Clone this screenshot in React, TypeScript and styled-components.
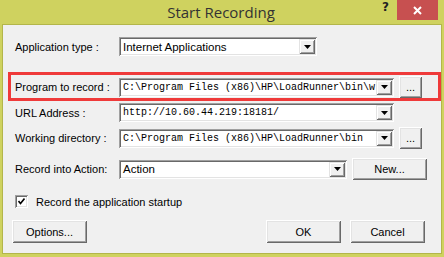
import React from 'react';
import styled, { createGlobalStyle } from 'styled-components';

const GlobalStyle = createGlobalStyle`
  body {
    margin: 0;
    background: #ffffff;
  }
`;

const Window = styled.div`
  display: flex;
  flex-flow: column;
  width: 444px;
  height: 257px;
  background-color: #cfd25f;
  font-family: 'Liberation Sans', Arial, sans-serif;
  font-size: 11px;
  color: #000;
  overflow: hidden;
`;

const TitleBar = styled.div`
  display: grid;
  grid-template-columns: 1fr auto 1fr;
  align-items: start;
  height: 24px;
`;

const Title = styled.div`
  grid-column: 2;
  font-family: 'Open Sans', 'Noto Sans', sans-serif;
  font-size: 15px;
  line-height: 22px;
  color: #333;
  padding-top: 1px;
  margin-left: -2px;
`;

const Controls = styled.div`
  grid-column: 3;
  justify-self: end;
  display: flex;
  align-items: flex-start;
  margin-right: 6px;
`;

const Help = styled.div`
  font-family: 'DejaVu Sans', sans-serif;
  font-weight: bold;
  font-size: 12px;
  line-height: 14px;
  color: #222;
  margin-right: 8px;
`;

const Close = styled.div`
  display: flex;
  justify-content: center;
  align-items: center;
  width: 41px;
  height: 20px;
  background-color: #c75050;
`;

const Client = styled.div`
  flex: 1;
  display: flex;
  flex-flow: column;
  margin: 0 2px 3px 2px;
  border: 1px solid #b3b64a;
  background-color: #f0f0f0;
`;

// label column + field + optional button
const Row = styled.div<{ $mt: number }>`
  display: grid;
  grid-template-columns: 99px auto auto;
  justify-content: start;
  align-items: center;
  column-gap: 5px;
  margin-top: ${(p) => p.$mt}px;
  padding-left: 12px;
`;

const Highlight = styled(Row)`
  margin-left: 5px;
  padding: 1px 0 0 4px;
  border: 3px solid #ef3a3a;
`;

const Label = styled.span`
  white-space: nowrap;
`;

const Combo = styled.div<{ $w: number }>`
  display: flex;
  align-items: center;
  justify-content: space-between;
  box-sizing: border-box;
  width: ${(p) => p.$w}px;
  height: 19px;
  padding: 2px 2px 2px 3px;
  background: #fff;
  box-shadow: inset 1px 1px #a0a0a0, inset -1px -1px #fff, inset 2px 2px #696969,
    inset -2px -2px #e3e3e3;
`;

const ComboText = styled.span<{ $mono?: boolean }>`
  overflow: hidden;
  white-space: nowrap;
  flex: 1;
  font-family: ${(p) =>
    p.$mono ? "'Liberation Mono', 'Courier New', monospace" : "'Liberation Sans', Arial, sans-serif"};
  font-size: ${(p) => (p.$mono ? '10px' : '11.5px')};
  padding-left: 1px;
`;

const DropButton = styled.div`
  display: flex;
  justify-content: center;
  align-items: center;
  flex: none;
  width: 16px;
  height: 15px;
  background: #f0f0f0;
  box-shadow: inset 1px 1px #e3e3e3, inset -1px -1px #696969, inset 2px 2px #fff,
    inset -2px -2px #a0a0a0;
`;

const Button = styled.div<{ $w: number }>`
  display: flex;
  justify-content: center;
  align-items: center;
  box-sizing: border-box;
  width: ${(p) => p.$w}px;
  height: 22px;
  background: #f0f0f0;
  box-shadow: inset 1px 1px #fff, inset -1px -1px #696969, inset 2px 2px #e3e3e3,
    inset -2px -2px #a0a0a0;
  white-space: nowrap;
`;

const CheckRow = styled.div`
  display: flex;
  align-items: center;
  gap: 8px;
  margin: 15px 0 0 12px;
`;

const CheckBox = styled.div`
  display: flex;
  justify-content: center;
  align-items: center;
  width: 13px;
  height: 13px;
  box-sizing: border-box;
  background: #fff;
  box-shadow: inset 1px 1px #a0a0a0, inset -1px -1px #fff, inset 2px 2px #696969,
    inset -2px -2px #e3e3e3;
`;

const Footer = styled.div`
  display: flex;
  align-items: center;
  margin: 12px 0 0 9px;
  padding-right: 16px;
`;

const Spacer = styled.div`
  flex: 1;
`;

const FooterButton = styled(Button)`
  height: 23px;
  & + & {
    margin-left: 9px;
  }
`;

const Arrow = () => (
  <svg width="7" height="4" viewBox="0 0 7 4">
    <path d="M0 0h7L3.5 4z" fill="#000" />
  </svg>
);

const App: React.FC = () => {
  return (
    <>
      <GlobalStyle />
      <Window>
        <TitleBar>
          <Title>Start Recording</Title>
          <Controls>
            <Help>?</Help>
            <Close>
              <svg width="9" height="9" viewBox="0 0 9 9">
                <path d="M1 1l7 7M8 1L1 8" stroke="#fff" strokeWidth="2" />
              </svg>
            </Close>
          </Controls>
        </TitleBar>
        <Client>
          <Row $mt={12}>
            <Label>Application type :</Label>
            <Combo $w={198}>
              <ComboText>Internet Applications</ComboText>
              <DropButton>
                <Arrow />
              </DropButton>
            </Combo>
          </Row>
          <Highlight $mt={16}>
            <Label>Program to record :</Label>
            <Combo $w={275}>
              <ComboText $mono>C:\Program Files (x86)\HP\LoadRunner\bin\wlrun.exe</ComboText>
              <DropButton>
                <Arrow />
              </DropButton>
            </Combo>
            <Button $w={23}>...</Button>
          </Highlight>
          <Row $mt={2}>
            <Label>URL Address :</Label>
            <Combo $w={275}>
              <ComboText $mono>http://10.60.44.219:18181/</ComboText>
              <DropButton>
                <Arrow />
              </DropButton>
            </Combo>
          </Row>
          <Row $mt={5}>
            <Label>Working directory :</Label>
            <Combo $w={275}>
              <ComboText $mono>C:\Program Files (x86)\HP\LoadRunner\bin</ComboText>
              <DropButton>
                <Arrow />
              </DropButton>
            </Combo>
            <Button $w={23}>...</Button>
          </Row>
          <Row $mt={9}>
            <Label>Record into Action:</Label>
            <Combo $w={228}>
              <ComboText>Action</ComboText>
              <DropButton>
                <Arrow />
              </DropButton>
            </Combo>
            <Button $w={75}>New...</Button>
          </Row>
          <CheckRow>
            <CheckBox>
              <svg width="7" height="7" viewBox="0 0 7 7">
                <path d="M0.5 3l2 2.5L6.5 0.5" stroke="#000" strokeWidth="1.6" fill="none" />
              </svg>
            </CheckBox>
            <span>Record the application startup</span>
          </CheckRow>
          <Footer>
            <FooterButton $w={75}>Options...</FooterButton>
            <Spacer />
            <FooterButton $w={75}>OK</FooterButton>
            <FooterButton $w={75}>Cancel</FooterButton>
          </Footer>
        </Client>
      </Window>
    </>
  );
};

export default App;
